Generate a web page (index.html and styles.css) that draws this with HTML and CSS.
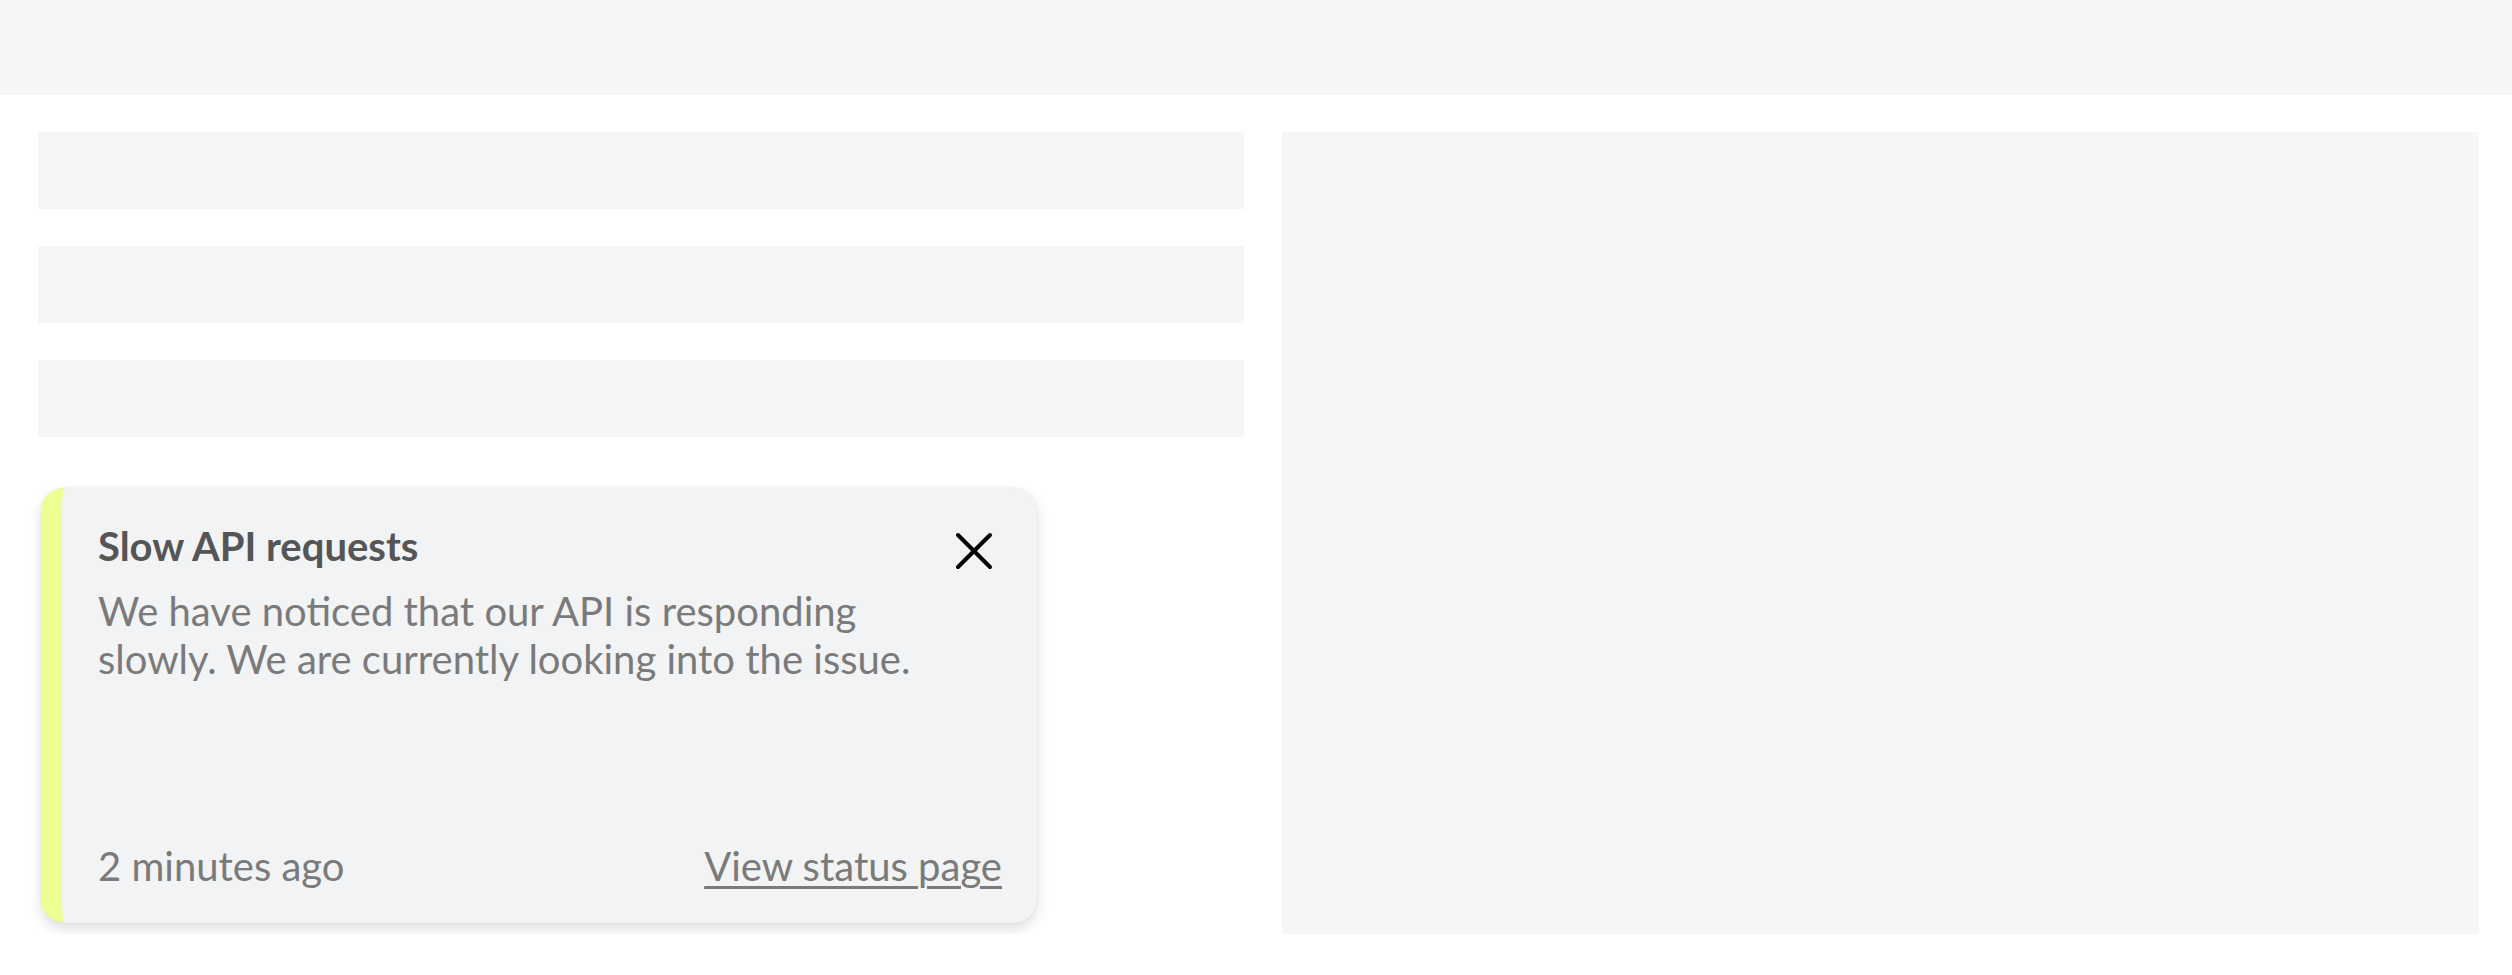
FILE: index.html
```html
<!DOCTYPE html>
<html lang="en">
<head>
  <meta charset="UTF-8">
  <meta name="viewport" content="width=device-width, initial-scale=1.0">
  <title>Status</title>
  <link rel="stylesheet" href="styles.css">
</head>
<body>

  <header class="top-bar"></header>

  <main class="layout">
    <div class="left-col">
      <div class="placeholder-row"></div>
      <div class="placeholder-row"></div>
      <div class="placeholder-row"></div>

      <div class="toast">
        <div class="toast-head">
          <h2 class="toast-title">Slow API requests</h2>
          <button class="close-button" aria-label="Close">
            <svg width="38" height="38" viewBox="0 0 38 38">
              <path d="M3 3 L35 35 M35 3 L3 35" stroke="#000" stroke-width="4" stroke-linecap="round" fill="none"/>
            </svg>
          </button>
        </div>
        <p class="toast-text">We have noticed that our API is responding slowly. We are currently looking into the issue.</p>
        <div class="toast-foot">
          <span class="toast-time">2 minutes ago</span>
          <a class="toast-link" href="#">View status page</a>
        </div>
      </div>
    </div>

    <div class="right-panel"></div>
  </main>

</body>
</html>
```

FILE: styles.css
```css
body {
  margin: 0;
  padding: 0;
  background-color: #fff;
  font-family: 'Lato', 'Open Sans', sans-serif;
}
.top-bar {
  height: 95px;
  background-color: #f6f6f6;
}
.layout {
  display: grid;
  grid-template-columns: 1206px 1197px;
  column-gap: 38px;
  padding: 37px 33px 0 38px;
}
.left-col {
  display: flex;
  flex-direction: column;
  gap: 37px;
}
.placeholder-row {
  height: 77px;
  background-color: #f6f6f6;
}
.right-panel {
  height: 802px;
  background-color: #f6f6f6;
}
.toast {
  display: flex;
  flex-direction: column;
  box-sizing: border-box;
  width: 996px;
  height: 435px;
  margin: 14px 0 0 3px;
  padding: 34px 35px 29px 36px;
  background-color: #f2f3f5;
  border-left: 21px solid #ebff92;
  border-radius: 24px;
  box-shadow: 0 6px 14px rgba(0, 0, 0, 0.13), 0 0 2px rgba(0, 0, 0, 0.08);
}
.toast-head {
  display: flex;
  justify-content: space-between;
  align-items: flex-start;
}
.toast-title {
  margin: 0;
  font-size: 40px;
  line-height: 48px;
  font-weight: bold;
  color: #555;
}
.close-button {
  width: 48px;
  height: 48px;
  margin: 5px 4px 0 0;
  padding: 0;
  border: none;
  background: none;
  display: flex;
  align-items: center;
  justify-content: center;
  cursor: pointer;
}
.toast-text {
  margin: 12px 0 0 0;
  max-width: 850px;
  font-size: 40px;
  line-height: 48px;
  color: #7a7a7a;
}
.toast-foot {
  margin-top: auto;
  display: flex;
  justify-content: space-between;
  align-items: baseline;
  font-size: 40px;
  line-height: 56px;
  color: #7a7a7a;
}
.toast-link {
  color: #7a7a7a;
  text-decoration: underline;
  text-underline-offset: 5px;
  text-decoration-thickness: 3px;
}
```
